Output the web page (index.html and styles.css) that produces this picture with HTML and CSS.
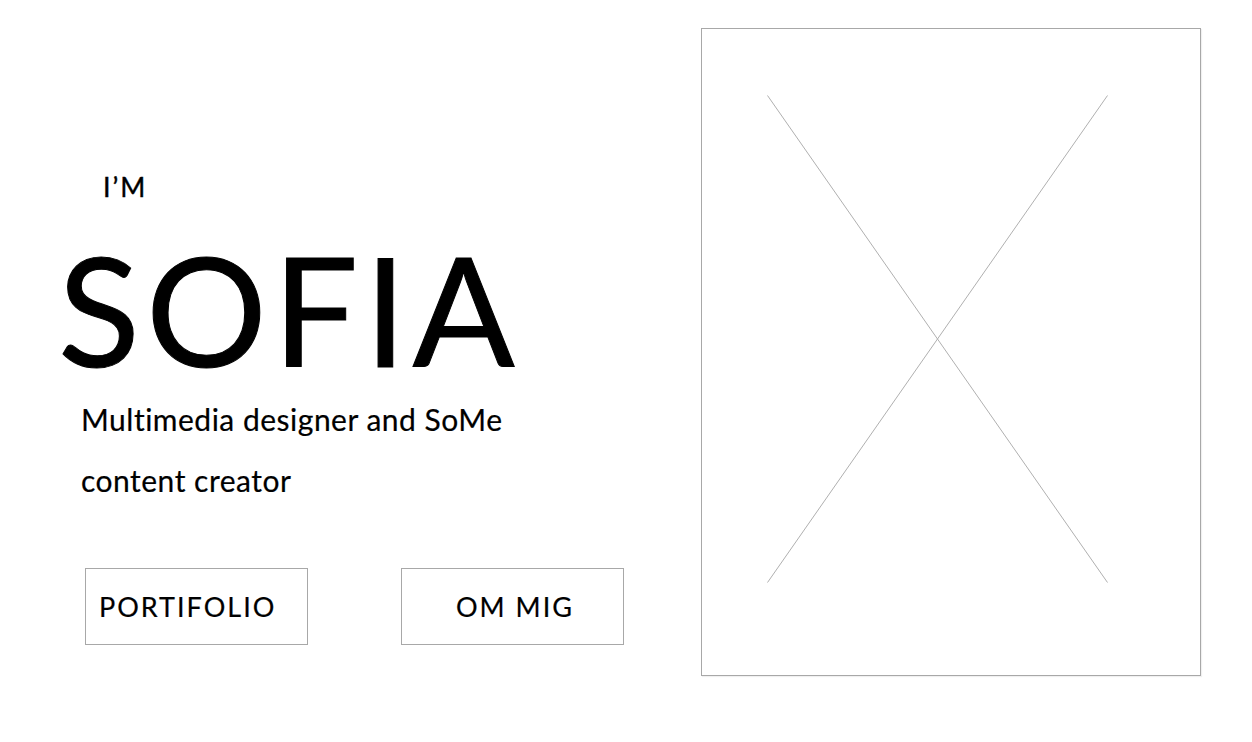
FILE: index.html
```html
<!DOCTYPE html>
<html lang="da">
<head>
<meta charset="utf-8">
<title>Sofia</title>
<link rel="stylesheet" href="styles.css">
</head>
<body>
<main class="page">
  <section class="intro">
    <p class="greeting">I’M</p>
    <h1 class="name">SOFIA</h1>
    <p class="tagline">Multimedia designer and SoMe<br>content creator</p>
    <div class="actions">
      <a class="btn btn-portfolio" href="#">PORTIFOLIO</a>
      <a class="btn btn-about" href="#">OM MIG</a>
    </div>
  </section>
  <figure class="photo">
    <svg class="photo-x" viewBox="0 0 498 646" width="498" height="646">
      <line x1="65.5" y1="66.5" x2="405.5" y2="553.5"/>
      <line x1="405.5" y1="66.5" x2="65.5" y2="553.5"/>
    </svg>
  </figure>
</main>
</body>
</html>
```
FILE: styles.css
```css
* { box-sizing: border-box; }
html, body { margin: 0; padding: 0; background: #fff; }
body {
  font-family: Lato, "Open Sans", sans-serif;
  color: #000;
  width: 1252px;
  height: 742px;
  overflow: hidden;
}
.page {
  display: flex;
  align-items: flex-start;
}
.intro {
  width: 701px;
  padding-top: 173px;
  display: flex;
  flex-direction: column;
  align-items: flex-start;
}
.greeting {
  margin: 0 0 0 103px;
  font-size: 27px;
  line-height: 27px;
  letter-spacing: 2px;
  -webkit-text-stroke: 0.4px #000;
}
.name {
  margin: 33px 0 0 58px;
  font-size: 151px;
  line-height: 151px;
  font-weight: 400;
  letter-spacing: 6px;
  -webkit-text-stroke: 1px #000;
}
.tagline {
  margin: 5px 0 0 81px;
  font-size: 30px;
  line-height: 61px;
  letter-spacing: 0.5px;
  -webkit-text-stroke: 0.2px #000;
}
.actions {
  margin: 57px 0 0 85px;
  display: flex;
  gap: 93px;
}
.btn {
  width: 223px;
  height: 77px;
  border: 1px solid #a8a8a8;
  display: flex;
  align-items: center;
  color: #000;
  text-decoration: none;
  font-size: 27px;
  letter-spacing: 2px;
  -webkit-text-stroke: 0.2px #000;
}
.btn-portfolio { padding-left: 13px; }
.btn-about { padding-left: 54px; }
.photo {
  margin: 28px 0 0 0;
  width: 500px;
  height: 648px;
  border: 1px solid #a8a8a8;
  box-shadow: 1px 1px 1px rgba(0,0,0,0.06);
}
.photo-x { display: block; }
.photo-x line {
  stroke: #b0b0b0;
  stroke-width: 1;
}
```
